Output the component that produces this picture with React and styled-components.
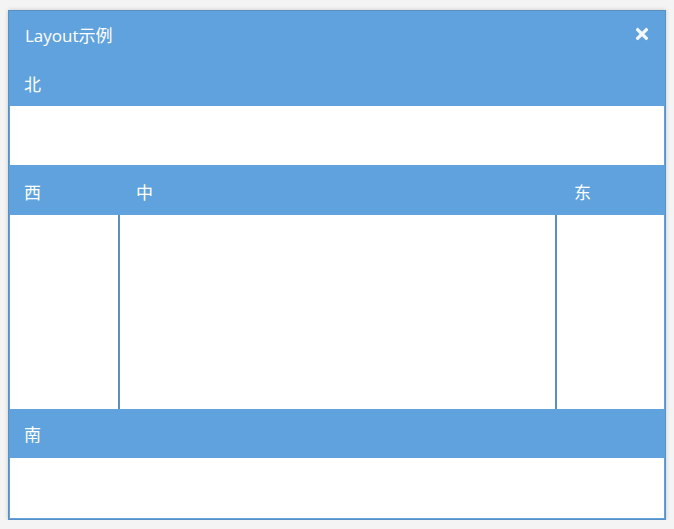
import React from "react";
import styled, { createGlobalStyle } from "styled-components";
import { FaTimes } from "react-icons/fa";

const Global = createGlobalStyle`
  html, body { margin: 0; padding: 0; background: #f4f4f4; }
  body { font-family: "Open Sans", "Noto Sans CJK SC", sans-serif; }
`;

const Window = styled.div`
  box-sizing: border-box;
  margin: 10px 0 0 8px;
  width: 658px;
  height: 510px;
  background: #5fa2dd;
  border: 1px solid #5a8fc2;
  box-shadow: 0 0 4px rgba(0, 0, 0, 0.18);
  display: flex;
  flex-direction: column;
`;

const WinHeader = styled.div`
  height: 49px;
  flex: none;
  display: flex;
  align-items: center;
  justify-content: space-between;
  padding: 0 14px 0 16px;
  color: #fff;
`;

const Title = styled.span`
  font-size: 17px;
  line-height: 20px;
  color: #fff;
`;

const Close = styled.span`
  display: flex;
  color: #f4f8fc;
  font-size: 18px;
  margin-top: -3px;
`;

const Body = styled.div`
  flex: 1;
  display: flex;
  flex-direction: column;
`;

const Row = styled.div`
  display: flex;
  margin-top: ${(p) => p.$gap || 0}px;
`;

const Panel = styled.div`
  box-sizing: border-box;
  display: flex;
  flex-direction: column;
  width: ${(p) => (p.$w ? p.$w + "px" : "auto")};
  flex: ${(p) => (p.$w ? "none" : "1")};
`;

const PanelHeader = styled.div`
  height: ${(p) => p.$h}px;
  display: flex;
  align-items: center;
  padding-left: ${(p) => p.$pl || 15}px;
  color: #fff;
  font-size: 17px;
  background: #5fa2dd;
`;

const PanelBody = styled.div`
  box-sizing: border-box;
  height: ${(p) => p.$h}px;
  background: #fff;
  border-left: 1px solid ${(p) => p.$lc || "#5fa2dd"};
  border-right: 1px solid ${(p) => p.$rc || "#5fa2dd"};
`;

export default function App() {
  return (
    <>
      <Global />
      <Window>
        <WinHeader>
          <Title>Layout示例</Title>
          <Close>
            <FaTimes />
          </Close>
        </WinHeader>
        <Body>
          <Row>
            <Panel>
              <PanelHeader $h={46}>北</PanelHeader>
              <PanelBody $h={59} />
            </Panel>
          </Row>
          <Row $gap={2}>
            <Panel $w={110}>
              <PanelHeader $h={48}>西</PanelHeader>
              <PanelBody $h={194} $rc="#5a8fc2" />
            </Panel>
            <Panel>
              <PanelHeader $h={48} $pl={17}>中</PanelHeader>
              <PanelBody $h={194} $lc="#5a8fc2" $rc="#5a8fc2" />
            </Panel>
            <Panel $w={109}>
              <PanelHeader $h={48} $pl={18}>东</PanelHeader>
              <PanelBody $h={194} $lc="#5a8fc2" />
            </Panel>
          </Row>
          <Row>
            <Panel>
              <PanelHeader $h={49}>南</PanelHeader>
              <PanelBody $h={60} />
            </Panel>
          </Row>
        </Body>
      </Window>
    </>
  );
}
